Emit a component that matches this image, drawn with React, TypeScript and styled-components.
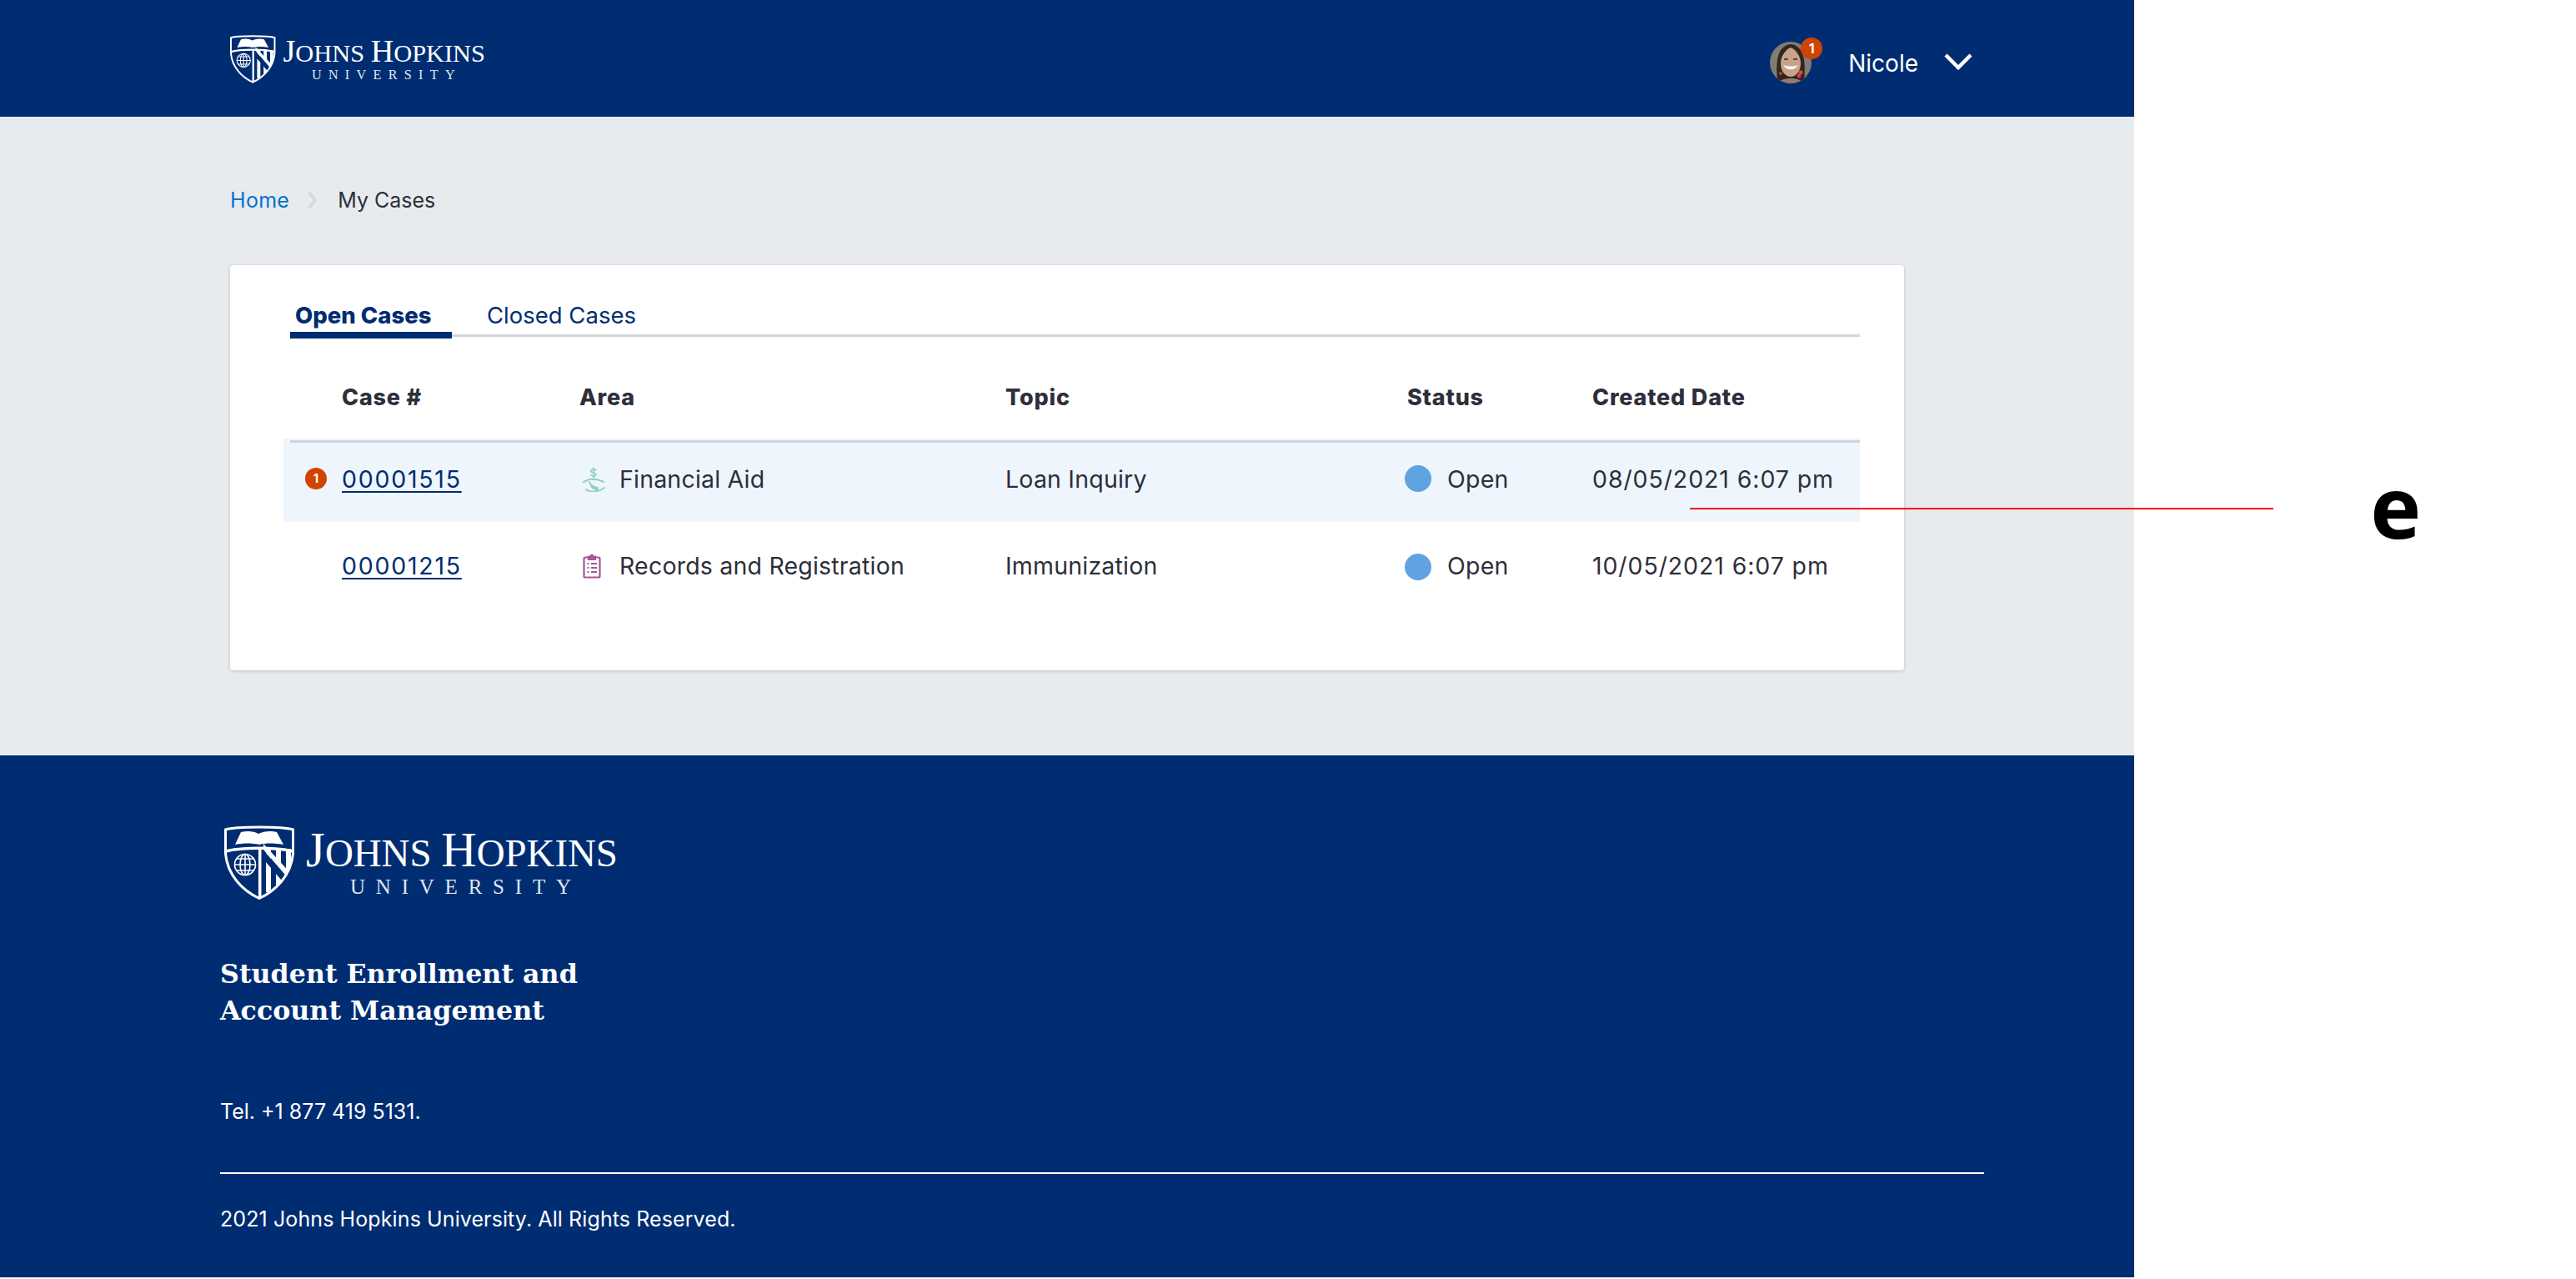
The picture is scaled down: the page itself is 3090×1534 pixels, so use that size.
import React from 'react';
import styled, { createGlobalStyle } from 'styled-components';

const GlobalStyle = createGlobalStyle`
  html, body {
    margin: 0;
    padding: 0;
    background: #fff;
  }
  body {
    font-family: Inter, "Noto Sans", sans-serif;
    color: #2d2f3a;
  }
`;

const navy = '#002d72';

const Page = styled.div`
  position: relative;
  width: 3090px;
  height: 1534px;
  overflow: hidden;
`;

const Site = styled.div`
  width: 2560px;
  display: flex;
  flex-direction: column;
`;

const TopBar = styled.header`
  height: 140px;
  background: ${navy};
  display: flex;
  align-items: flex-start;
  justify-content: space-between;
  padding: 42px 194px 0 276px;
  box-sizing: border-box;
`;

const UserMenu = styled.div`
  display: flex;
  align-items: center;
  height: 58px;
  color: #fff;
  font-size: 28px;
`;

const AvatarWrap = styled.div`
  position: relative;
  width: 50px;
  height: 50px;
  margin: 7px 44px 0 0;
`;

const AvatarBadge = styled.span`
  position: absolute;
  top: -5px;
  right: -13px;
  width: 26px;
  height: 26px;
  border-radius: 50%;
  background: #d04300;
  color: #fff;
  font-size: 16px;
  font-weight: 700;
  line-height: 26px;
  text-align: center;
`;

const UserName = styled.span`
  margin: 9px 31px 0 0;
`;

const UserChevron = styled.svg`
  margin-top: 5px;
`;

const Main = styled.main`
  background: #e8ebee;
  padding: 82px 0 102px 276px;
`;

const Crumbs = styled.nav`
  display: flex;
  align-items: center;
  height: 36px;
  font-size: 25px;
  color: #2d2f3a;
`;

const CrumbLink = styled.a`
  color: #0072ce;
  letter-spacing: 0.3px;
`;

const CrumbSep = styled.svg`
  width: 12px;
  height: 20px;
  margin: 0 24px 0 22px;
`;

const Card = styled.section`
  width: 2008px;
  height: 486px;
  margin-top: 60px;
  background: #fff;
  border-radius: 4px;
  box-shadow: 0 1px 4px rgba(0, 0, 0, 0.18);
  box-sizing: border-box;
  padding-left: 64px;
`;

const TabList = styled.div`
  display: flex;
  align-items: flex-start;
  margin-left: 8px;
  width: 1883px;
  padding-top: 40px;
  height: 43px;
  border-bottom: 3px solid #d5d6d8;
`;

const Tab = styled.div<{ $active?: boolean }>`
  box-sizing: border-box;
  height: 48px;
  line-height: 40px;
  font-size: 27.5px;
  color: ${navy};
  font-weight: ${(p) => (p.$active ? 800 : 400)};
  ${(p) =>
    p.$active
      ? `width: 194px; padding-left: 6px; border-bottom: 8px solid ${navy}; margin-right: 42px;`
      : ''}
`;

const HeadRow = styled.div`
  display: grid;
  grid-template-columns: 70px 285px 511px 482px 222px 321px;
  align-items: center;
  width: 1891px;
  height: 122px;
  box-sizing: border-box;
  padding-top: 23px;
  font-size: 27px;
  letter-spacing: 0.8px;
  font-weight: 800;
  color: #2d2f3a;
`;

const Row = styled.div<{ $new?: boolean }>`
  position: relative;
  display: grid;
  grid-template-columns: 70px 285px 511px 482px 222px 321px;
  align-items: center;
  width: 1891px;
  height: ${(p) => (p.$new ? 100 : 112)}px;
  box-sizing: border-box;
  padding-bottom: ${(p) => (p.$new ? 4 : 8)}px;
  background: ${(p) => (p.$new ? '#eef5fc' : 'transparent')};
  font-size: 28.5px;
  letter-spacing: 0.2px;
  color: #2d2f3a;

  ${(p) =>
    p.$new
      ? `&::before {
    content: '';
    position: absolute;
    left: 8px;
    right: 0;
    top: 2px;
    height: 3px;
    background: #cbd5e0;
  }`
      : ''}
`;

const CountDot = styled.span`
  justify-self: end;
  margin-right: 18px;
  width: 26px;
  height: 26px;
  border-radius: 50%;
  background: #d04300;
  color: #fff;
  font-size: 15px;
  font-weight: 700;
  line-height: 26px;
  text-align: center;
  letter-spacing: 0;
`;

const CaseLink = styled.a`
  color: ${navy};
  letter-spacing: 1.75px;
  text-decoration: underline;
  text-underline-offset: 4px;
  text-decoration-thickness: 2px;
`;

const AreaCell = styled.div`
  display: flex;
  align-items: center;
`;

const AreaIcon = styled.svg`
  width: 28px;
  height: 32px;
  margin: 0 17px 0 3px;
  flex: none;
`;

const StatusCell = styled.div`
  display: flex;
  align-items: center;
  margin-left: -3px;
`;

const StatusDot = styled.span<{ $drop?: boolean }>`
  width: 32px;
  height: 32px;
  border-radius: 50%;
  background: #5fa3e0;
  margin-right: 19px;
  margin-top: ${(p) => (p.$drop ? 4 : 0)}px;
`;

const DateCell = styled.div`
  letter-spacing: 0.9px;
`;

const Footer = styled.footer`
  height: 626px;
  background: ${navy};
  color: #fff;
  padding: 84px 180px 0 264px;
  box-sizing: border-box;
`;

const FooterLogo = styled.div`
  margin-left: 5px;
  height: 90px;
`;

const FooterTitle = styled.h2`
  margin: 66px 0 0;
  font-family: "DejaVu Serif", "Liberation Serif", serif;
  font-size: 31.7px;
  line-height: 44px;
  font-weight: 700;
`;

const FooterTel = styled.p`
  margin: 84px 0 0;
  font-size: 25px;
  line-height: 30px;
`;

const FooterRule = styled.hr`
  margin: 58px 0 0;
  border: 0;
  height: 2px;
  background: #fff;
`;

const FooterCopy = styled.p`
  margin: 39px 0 0;
  font-size: 25px;
  line-height: 30px;
  letter-spacing: 0.1px;
`;

const CalloutLine = styled.div`
  position: absolute;
  left: 2027px;
  top: 609px;
  width: 700px;
  height: 2px;
  background: #f00;
`;

const CalloutLetter = styled.div`
  position: absolute;
  left: 2843px;
  top: 548px;
  font-family: "Noto Sans", sans-serif;
  font-weight: 700;
  font-size: 103px;
  line-height: 116px;
  color: #000;
`;

const LogoSvg = styled.svg<{ $w: number }>`
  display: block;
  width: ${(p) => p.$w}px;
  height: auto;
  overflow: visible;
`;

function JhuLogo({ width, id }: { width: number; id: string }) {
  const shield = 'M1.5 5C14 1 70 1 82.5 5V34C80 60 62 78 42 87.5C22 78 4 60 1.5 34Z';
  return (
    <LogoSvg $w={width} viewBox="0 0 472 90">
      <defs>
        <clipPath id={id}>
          <path d={shield} />
        </clipPath>
      </defs>
      <path d={shield} fill="none" stroke="#fff" strokeWidth="3" />
      <path d="M2 31C20 26 64 26 82 31" fill="none" stroke="#fff" strokeWidth="3.5" />
      <path d="M13 23L20 8C28 6 36 7 41 10C47 7 56 6 63 8L71 23C60 21 50 21 42 23C32 21 24 21 13 23Z" fill="#fff" />
      <g fill="none" stroke="#fff" strokeWidth="1.6">
        <circle cx="25" cy="47" r="12.5" />
        <ellipse cx="25" cy="47" rx="6" ry="12.5" />
        <path d="M25 34.5V59.5M12.5 47H37.5M14.5 40H35.5M14.5 54H35.5" />
      </g>
      <g clipPath={`url(#${id})`} fill="#fff">
        <rect x="41" y="28" width="3.5" height="62" />
        <path d="M47 29L84 72V62L47 22Z" />
        <path d="M50 28H56V40L50 33ZM62 28H68V52L62 45ZM74 28H80V64L74 58Z" />
        <path d="M50 44L56 51V80H50ZM62 58L68 65V72H62Z" />
      </g>
      <text fontFamily='"Liberation Serif", serif' fill="#fff" y="49" x="98" textLength="374" lengthAdjust="spacing">
        <tspan fontSize="59">J</tspan>
        <tspan fontSize="47">OHNS </tspan>
        <tspan fontSize="59">H</tspan>
        <tspan fontSize="47">OPKINS</tspan>
      </text>
      <text fontFamily='"Liberation Serif", serif' fill="#dfe6f0" y="82" x="151" fontSize="25" textLength="265" lengthAdjust="spacing">
        UNIVERSITY
      </text>
    </LogoSvg>
  );
}

function Avatar() {
  return (
    <svg width="50" height="50" viewBox="0 0 50 50">
      <defs>
        <clipPath id="avatar-clip">
          <circle cx="25" cy="25" r="25" />
        </clipPath>
      </defs>
      <g clipPath="url(#avatar-clip)">
        <rect width="50" height="50" fill="#7f7d75" />
        <path d="M9 46C7 26 8 5 25 3C42 5 43 26 41 46C36 50 14 50 9 46Z" fill="#33261f" />
        <path d="M25 7C18 10 13 18 13 26C13 36 19 42 25 42C31 42 37 36 37 26C37 18 32 10 25 7Z" fill="#c9a28a" />
        <path d="M10 50C13 42 37 42 40 50Z" fill="#9a7a68" />
        <path d="M16 28C20 35 30 35 34 28C29 30 21 30 16 28Z" fill="#fff" />
        <path d="M17 21H22M28 21H33" stroke="#3a2a22" strokeWidth="1.6" />
        <circle cx="37" cy="37" r="2.4" fill="#e2552a" />
        <circle cx="35" cy="41" r="2.4" fill="#e8327f" />
        <circle cx="13" cy="38" r="2" fill="#b8401f" />
      </g>
    </svg>
  );
}

function FinanceIcon() {
  return (
    <AreaIcon viewBox="0 0 28 32" fill="none" stroke="#8fd0c0" strokeWidth="2" strokeLinecap="round">
      <path d="M17 6C16 4.5 11 4.5 11 7C11 9.5 17 8.5 17 11C17 13.5 12 13.5 11 12M14 3V15" strokeWidth="1.6" />
      <path d="M2 20C6 18 9 16 13 17C17 16 21 18 26 20" />
      <path d="M9 20C10 24 14 26 18 27C20 28 19 30 17 29C14 28 12 27 11 25" />
      <path d="M5 29C9 32 14 32 17 31C20 31 24 29 27 27" />
    </AreaIcon>
  );
}

function RecordsIcon() {
  return (
    <AreaIcon viewBox="0 0 28 32" fill="none" stroke="#a15a95" strokeWidth="2.2">
      <path d="M4 6.5H20C21 6.5 21.5 7 21.5 8V29C21.5 30 21 30.5 20 30.5H4C3 30.5 2.5 30 2.5 29V8C2.5 7 3 6.5 4 6.5Z" />
      <path d="M8 5.5H16V9H8Z" fill="#a15a95" />
      <circle cx="12" cy="4.5" r="2" fill="#a15a95" stroke="none" />
      <path d="M6.5 14H8.5M11 14H18M6.5 19H8.5M11 19H18M6.5 24H8.5M11 24H18" />
    </AreaIcon>
  );
}

const cases = [
  { id: '00001515', area: 'Financial Aid', topic: 'Loan Inquiry', date: '08/05/2021 6:07 pm', isNew: true },
  { id: '00001215', area: 'Records and Registration', topic: 'Immunization', date: '10/05/2021 6:07 pm', isNew: false },
];

export default function App() {
  return (
    <Page>
      <GlobalStyle />
      <Site>
        <TopBar>
          <JhuLogo width={306} id="logo-top" />
          <UserMenu>
            <AvatarWrap>
              <Avatar />
              <AvatarBadge>1</AvatarBadge>
            </AvatarWrap>
            <UserName>Nicole</UserName>
            <UserChevron width="34" height="22" viewBox="0 0 34 22" fill="none" stroke="#fff" strokeWidth="4.5">
              <path d="M2 3L17 18L32 3" />
            </UserChevron>
          </UserMenu>
        </TopBar>

        <Main>
          <Crumbs>
            <CrumbLink>Home</CrumbLink>
            <CrumbSep viewBox="0 0 12 20" fill="none" stroke="#d6d8da" strokeWidth="4">
              <path d="M2 1L9 10L2 19" />
            </CrumbSep>
            <span>My Cases</span>
          </Crumbs>

          <Card>
            <TabList>
              <Tab $active>Open Cases</Tab>
              <Tab>Closed Cases</Tab>
            </TabList>
            <HeadRow>
              <span />
              <span>Case #</span>
              <span>Area</span>
              <span>Topic</span>
              <span>Status</span>
              <span>Created Date</span>
            </HeadRow>
            {cases.map((c) => (
              <Row key={c.id} $new={c.isNew}>
                {c.isNew ? <CountDot>1</CountDot> : <span />}
                <div>
                  <CaseLink>{c.id}</CaseLink>
                </div>
                <AreaCell>
                  {c.isNew ? <FinanceIcon /> : <RecordsIcon />}
                  {c.area}
                </AreaCell>
                <div>{c.topic}</div>
                <StatusCell>
                  <StatusDot $drop={!c.isNew} />
                  Open
                </StatusCell>
                <DateCell>{c.date}</DateCell>
              </Row>
            ))}
          </Card>
        </Main>

        <Footer>
          <FooterLogo>
            <JhuLogo width={472} id="logo-foot" />
          </FooterLogo>
          <FooterTitle>
            Student Enrollment and
            <br />
            Account Management
          </FooterTitle>
          <FooterTel>Tel. +1 877 419 5131.</FooterTel>
          <FooterRule />
          <FooterCopy>2021 Johns Hopkins University. All Rights Reserved.</FooterCopy>
        </Footer>
      </Site>
      <CalloutLine />
      <CalloutLetter>e</CalloutLetter>
    </Page>
  );
}
